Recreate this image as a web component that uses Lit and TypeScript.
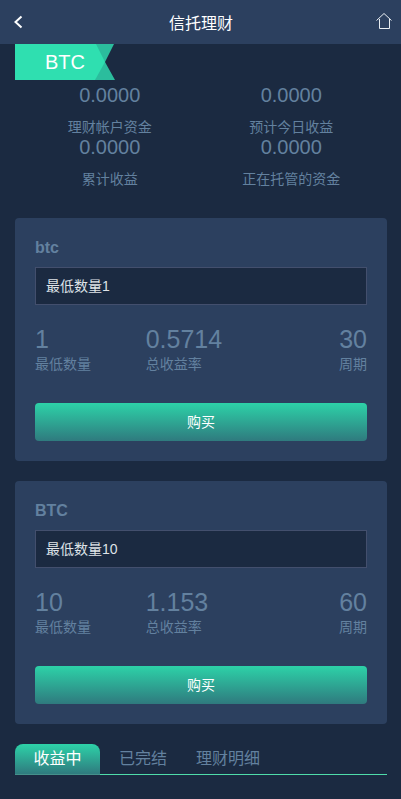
import { css, html, LitElement } from "lit";
import { customElement } from "lit/decorators.js";

const products = [
  { name: "btc", hint: "最低数量1", min: "1", rate: "0.5714", days: "30" },
  { name: "BTC", hint: "最低数量10", min: "10", rate: "1.153", days: "60" },
];

const stats = [
  { value: "0.0000", label: "理财帐户资金" },
  { value: "0.0000", label: "预计今日收益" },
  { value: "0.0000", label: "累计收益" },
  { value: "0.0000", label: "正在托管的资金" },
];

@customElement("app-root")
export class AppRoot extends LitElement {
  static styles = css`
    :host {
      display: block;
      width: 401px;
      height: 799px;
      overflow: hidden;
      background: #1b2a41;
      font-family: "Liberation Sans", "Noto Sans CJK SC", sans-serif;
      color: #63819f;
    }

    .header {
      height: 44px;
      background: #2c405f;
      display: flex;
      align-items: center;
      justify-content: space-between;
      padding: 0 7px 0 14px;
      color: #fff;
      font-size: 16px;
    }

    .header svg {
      display: block;
    }

    .ribbon {
      display: block;
      margin-left: 15px;
      position: relative;
      width: 100px;
      height: 36px;
    }

    .ribbon svg {
      position: absolute;
      inset: 0;
    }

    .ribbon span {
      position: absolute;
      left: 30px;
      top: 0;
      line-height: 36px;
      font-size: 20px;
      color: #fff;
    }

    .stats {
      display: grid;
      grid-template-columns: 1fr 1fr;
      padding: 0 19px;
      text-align: center;
    }

    .stat {
      height: 52px;
    }

    .stat .value {
      font-size: 20px;
      line-height: 30px;
    }

    .stat .label {
      font-size: 14px;
      line-height: 20px;
      margin-top: 7px;
      white-space: nowrap;
    }

    .cards {
      margin-top: 34px;
    }

    .card {
      margin: 0 14px 20px 15px;
      height: 243px;
      box-sizing: border-box;
      padding: 20px;
      background: #2c405f;
      border-radius: 4px;
    }

    .name {
      font-size: 16px;
      font-weight: bold;
      line-height: 20px;
    }

    .input {
      margin-top: 9px;
      height: 38px;
      box-sizing: border-box;
      border: 1px solid #434f6d;
      background: #1b2a41;
      padding: 0 10px;
      line-height: 36px;
      font-size: 14px;
      color: #dfe3e8;
    }

    .terms {
      display: grid;
      grid-template-columns: repeat(3, 1fr);
      margin-top: 19px;
    }

    .terms div:last-child {
      text-align: right;
    }

    .terms b {
      display: block;
      font-weight: normal;
      font-size: 25px;
      line-height: 30px;
    }

    .terms span {
      display: block;
      font-size: 14px;
      line-height: 20px;
    }

    .buy {
      margin-top: 29px;
      height: 38px;
      line-height: 38px;
      text-align: center;
      border-radius: 4px;
      background: linear-gradient(#2dd2a8, #2f7a7e);
      color: #fff;
      font-size: 14px;
    }

    .tabs {
      margin: 0 14px 0 15px;
      height: 31px;
      box-sizing: border-box;
      display: flex;
      border-bottom: 1px solid #4fdcaa;
      font-size: 16px;
      line-height: 30px;
    }

    .tab {
      padding: 0 14.5px;
    }

    .tab.active {
      width: 85px;
      box-sizing: border-box;
      text-align: center;
      padding: 0;
      height: 31px;
      color: #fff;
      border-radius: 8px 8px 0 0;
      border-bottom: 1px solid #44908a;
      background: linear-gradient(#2dd2a8, #2f7a7e);
    }

    .active + .tab {
      margin-left: 4.5px;
    }
  `;

  render() {
    return html`
      <div class="header">
        <svg width="12" height="16" viewBox="0 0 12 16">
          <path d="M7.5 2.5 L1.5 8 L7.5 13.5" fill="none" stroke="#fff" stroke-width="2"></path>
        </svg>
        <span>信托理财</span>
        <svg width="18" height="18" viewBox="0 0 18 18">
          <path d="M0.5 7.5 L8 0.5 L15.5 7.5 M3.5 6 V15.5 H13.5 V6" fill="none" stroke="#e8edf2" stroke-width="1"></path>
        </svg>
      </div>
      <div class="ribbon">
        <svg width="100" height="36" viewBox="0 0 100 36">
          <path d="M81 0 H99 L90 18 L100 36 H80 Z" fill="#2bbd9d"></path>
          <path d="M0 0 H81 L90 18 L80 36 H0 Z" fill="#2fdfb0"></path>
        </svg>
        <span>BTC</span>
      </div>
      <div class="stats">
        ${stats.map(
          (s) => html`<div class="stat">
            <div class="value">${s.value}</div>
            <div class="label">${s.label}</div>
          </div>`
        )}
      </div>
      <div class="cards">
        ${products.map(
          (p) => html`<div class="card">
            <div class="name">${p.name}</div>
            <div class="input">${p.hint}</div>
            <div class="terms">
              <div><b>${p.min}</b><span>最低数量</span></div>
              <div><b>${p.rate}</b><span>总收益率</span></div>
              <div><b>${p.days}</b><span>周期</span></div>
            </div>
            <div class="buy">购买</div>
          </div>`
        )}
      </div>
      <div class="tabs">
        <div class="tab active">收益中</div>
        <div class="tab">已完结</div>
        <div class="tab">理财明细</div>
      </div>
    `;
  }
}
